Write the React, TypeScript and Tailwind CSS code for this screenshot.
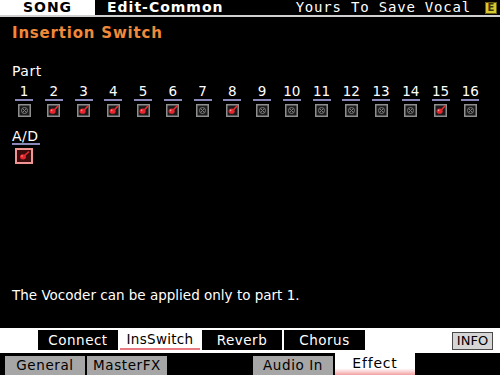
const parts = [false, true, true, true, true, true, false, true, false, false, false, false, false, false, true, false];

function Box({ on }: { on: boolean }) {
  return (
    <svg width="13" height="13" viewBox="0 0 13 13" className="block">
      <rect x="0.75" y="0.75" width="11.5" height="11.5" fill="#1a1a1a" stroke="#8e8e8e" strokeWidth="1.5" />
      {on ? (
        <g>
          <path d="M6 7.2 L10.8 2.2" stroke="#ee2a32" strokeWidth="1.6" strokeLinecap="round" />
          <ellipse cx="5.6" cy="7.2" rx="3" ry="2.6" fill="#e8242c" />
          <circle cx="4.6" cy="6.4" r="0.8" fill="#ff9a9a" />
        </g>
      ) : (
        <g stroke="#7c7c7c" strokeWidth="1" fill="none">
          <circle cx="6.5" cy="6.5" r="3" />
          <path d="M4.6 4.6 L8.4 8.4 M8.4 4.6 L4.6 8.4" />
        </g>
      )}
    </svg>
  );
}

export default function App() {
  return (
    <div className="w-[500px] h-[375px] bg-black overflow-hidden flex flex-col font-['DejaVu_Sans',sans-serif] text-white">
      {/* header */}
      <div className="h-[15px] flex items-center">
        <div className="w-[95px] h-full bg-white text-black font-bold text-[14px] leading-[15px] tracking-[1px] text-center">SONG</div>
        <div className="ml-[12px] font-bold text-[14px] leading-[15px] tracking-[1px]">Edit-Common</div>
        <div className="ml-auto font-['DejaVu_Sans_Mono',monospace] text-[14px] leading-[15px] tracking-[0.8px]">Yours To Save Vocal</div>
        <div className="ml-[14px] mr-[3px] w-[12px] h-[12px] bg-[#d6c830] border border-[#6a6010] text-[#3a3408] text-[10px] leading-[10px] font-bold flex items-center justify-center">E</div>
      </div>
      <div className="h-[2px] bg-[#cfcfcf]" />

      {/* main */}
      <div className="pl-[12px] mt-[7px] text-[15px] leading-[18px] font-bold tracking-[0.8px] text-[#f08a3a]">Insertion Switch</div>
      <div className="pl-[12px] mt-[21px] text-[14px] leading-[16px] tracking-[0.5px]">Part</div>

      <div className="mt-[4px] pl-[15px] flex gap-[11.75px]">
        {parts.map((on, i) => (
          <div key={i} className="w-[18px] flex flex-col items-center">
            <div className="text-[13.5px] leading-[16px]">{i + 1}</div>
            <div className="w-full h-[2px] bg-[#8a88b8]" />
            <div className="mt-[3px]">
              <Box on={on} />
            </div>
          </div>
        ))}
      </div>

      <div className="pl-[12px] mt-[12px] flex flex-col items-start">
        <div className="text-[14px] leading-[14px] tracking-[0.5px]">A/D</div>
        <div className="w-[28px] h-[2px] bg-[#8a88b8]" />
        <div className="mt-[3px] ml-[3px] w-[18px] h-[16px] border-2 border-[#f09494] bg-[#3a0c0c] flex items-center justify-center">
          <svg width="12" height="10" viewBox="0 0 12 10" className="block">
            <path d="M5.5 5.5 L10.5 1" stroke="#ee2a32" strokeWidth="1.6" strokeLinecap="round" />
            <ellipse cx="5" cy="5.8" rx="3" ry="2.6" fill="#e8242c" />
            <circle cx="4" cy="5" r="0.8" fill="#ff9a9a" />
          </svg>
        </div>
      </div>

      <div className="mt-auto pl-[12px] text-[13.5px] leading-[16px]">The Vocoder can be applied only to part 1.</div>

      {/* bottom tabs */}
      <div className="mt-[25px] h-[25px] bg-white flex items-start pt-[2px] pl-[38px]">
        <div className="flex gap-[2px]">
          <div className="w-[80px] h-[20px] bg-black text-white text-[13.5px] leading-[20px] tracking-[0.5px] text-center">Connect</div>
          <div className="w-[80px] h-[20px] bg-white text-black text-[13.5px] leading-[18px] tracking-[0.3px] text-center border-b-2 border-[#e87a82]">InsSwitch</div>
          <div className="w-[80px] h-[20px] bg-black text-white text-[13.5px] leading-[20px] tracking-[0.5px] text-center">Reverb</div>
          <div className="w-[81px] h-[20px] bg-black text-white text-[13.5px] leading-[20px] tracking-[0.5px] text-center">Chorus</div>
        </div>
        <div className="ml-auto mr-[7px] mt-[2px] w-[41px] h-[18px] bg-[#d6d6d6] border border-[#4a4a4a] text-black text-[13px] leading-[16px] text-center">INFO</div>
      </div>
      <div className="h-[22px] flex items-start">
        <div className="ml-[5px] mt-[3px] flex gap-[2px]">
          <div className="w-[80px] h-[19px] bg-[#a6a6a6] text-black text-[13.5px] leading-[19px] tracking-[0.6px] text-center">General</div>
          <div className="w-[80px] h-[19px] bg-[#a6a6a6] text-black text-[13.5px] leading-[19px] tracking-[0.6px] text-center">MasterFX</div>
        </div>
        <div className="ml-[86px] mt-[3px] w-[80px] h-[19px] bg-[#a6a6a6] text-black text-[13.5px] leading-[19px] tracking-[0.6px] text-center">Audio In</div>
        <div className="ml-[2px] w-[80px] h-[22px] bg-gradient-to-b from-white from-70% to-[#f0a0a4] text-black text-[14px] leading-[20px] tracking-[0.8px] text-center">Effect</div>
      </div>
    </div>
  );
}
